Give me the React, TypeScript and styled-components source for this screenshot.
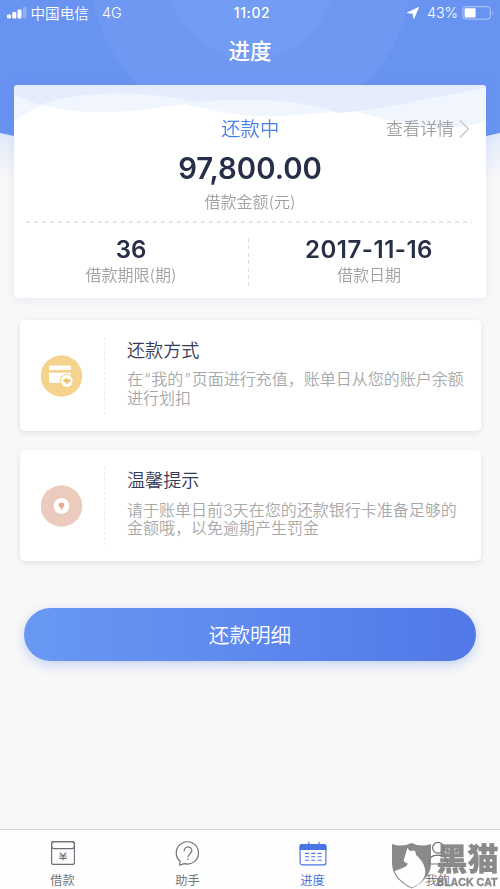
import React from "react";
import styled, { createGlobalStyle } from "styled-components";

const GlobalStyle = createGlobalStyle`
  * { box-sizing: border-box; }
  html, body { margin: 0; padding: 0; }
  body {
    width: 500px;
    height: 889px;
    overflow: hidden;
    background: #f8f8f8;
    font-family: Inter, "Noto Sans CJK SC", sans-serif;
    -webkit-font-smoothing: antialiased;
  }
`;

const Screen = styled.div`
  position: relative;
  display: flex;
  flex-direction: column;
  width: 500px;
  height: 889px;
  overflow: hidden;
  background: #f8f8f8;
`;

const Backdrop = styled.svg`
  position: absolute;
  top: 0;
  left: 0;
`;

const StatusBar = styled.header`
  position: relative;
  display: grid;
  grid-template-columns: 1fr auto 1fr;
  align-items: center;
  height: 26px;
  padding: 0 6px 0 7px;
  color: #fff;
  font-size: 14px;
  line-height: 20px;
`;

const StatusSide = styled.div<{ $end?: boolean }>`
  display: flex;
  align-items: center;
  justify-content: ${(p) => (p.$end ? "flex-end" : "flex-start")};
`;

const Carrier = styled.span`
  margin: 1px 13px 0 3.5px;
  font-size: 14.6px;
  font-weight: 350;
`;

const Network = styled.span`
  font-size: 14.3px;
  font-weight: 350;
`;

const Clock = styled.span`
  font-size: 14px;
  font-weight: 500;
  letter-spacing: 0.55px;
  padding-left: 3px;
`;

const Percent = styled.span`
  margin: 0 4px 0 8px;
  font-size: 14.3px;
  font-weight: 350;
`;

const PageTitle = styled.h1`
  position: relative;
  margin: 0;
  height: 59px;
  padding-top: 1px;
  color: #fff;
  font-size: 21.5px;
  font-weight: 450;
  line-height: 49px;
  text-align: center;
`;

const LoanCard = styled.section`
  position: relative;
  flex: none;
  display: flex;
  flex-direction: column;
  height: 213px;
  margin: 0 14px;
  overflow: hidden;
  border-radius: 4px;
  background: #fff;
`;

const CardShadow = styled.div`
  position: relative;
  margin-top: 0.4px;
  border-radius: 4px;
  filter: drop-shadow(0 1px 5px rgba(90, 110, 220, 0.13));
`;

const Waves = styled.svg`
  position: absolute;
  top: 0;
  left: 0;
`;

const CardTop = styled.div`
  position: relative;
  display: grid;
  grid-template-columns: 1fr auto 1fr;
  align-items: center;
  height: 28px;
  margin-top: 29px;
  padding-right: 16.5px;
`;

const Status = styled.span`
  grid-column: 2;
  padding: 1px 0 0 17px;
  color: #4a7ff0;
  font-size: 19.3px;
  font-weight: 350;
  line-height: 28px;
`;

const DetailLink = styled.a`
  display: flex;
  align-items: center;
  justify-content: flex-end;
  gap: 4.5px;
  color: #a0a0a0;
  font-size: 17px;
  font-weight: 350;
  line-height: 24px;
  svg { margin-top: 1px; }
`;

const Amount = styled.div`
  height: 44px;
  margin-top: 5px;
  color: #262f47;
  font-size: 29.3px;
  font-weight: 600;
  line-height: 44px;
  text-align: center;
`;

const Label = styled.div`
  color: #a0a0a0;
  font-size: 16px;
  font-weight: 350;
  line-height: 22px;
  text-align: center;
`;

const Divider = styled.div`
  flex: none;
  height: 1.5px;
  margin: 8px 14px 0 12px;
  background: repeating-linear-gradient(90deg, #e6e6e8 0 4px, transparent 4px 7.95px);
`;

const Facts = styled.div`
  display: grid;
  grid-template-columns: 234px 2px 236px;
  margin-top: 13px;
`;

const Fact = styled.div<{ $shift: number }>`
  display: flex;
  flex-direction: column;
  align-items: center;
  padding-left: ${(p) => p.$shift}px;
`;

const FactValue = styled.div<{ $tracking?: number }>`
  color: #262f47;
  font-size: 24px;
  font-weight: 600;
  line-height: 28px;
  letter-spacing: ${(p) => p.$tracking ?? 0}px;
`;

const FactRule = styled.div`
  width: 1px;
  height: 48px;
  margin-top: 2px;
  background: repeating-linear-gradient(180deg, #dedee2 0 4px, transparent 4px 7.4px);
`;

const InfoList = styled.div`
  display: flex;
  flex-direction: column;
  gap: 19.5px;
  margin: 21.5px 19.5px 0;
`;

const InfoCard = styled.section`
  display: grid;
  grid-template-columns: 84px 1px 1fr;
  height: 111px;
  border-radius: 5px;
  background: #fff;
  box-shadow: 0 2px 6px rgba(0, 0, 0, 0.09);
`;

const InfoIcon = styled.div`
  display: flex;
  align-items: center;
  justify-content: center;
  padding-top: 1px;
`;

const InfoRule = styled.div`
  height: 78px;
  margin-top: 17px;
  background: repeating-linear-gradient(180deg, #eeeeee 0 3px, transparent 3px 5px);
`;

const InfoBody = styled.div`
  padding: 17px 0 0 22.5px;
`;

const InfoTitle = styled.h2`
  margin: 0;
  color: #343b59;
  font-size: 18.1px;
  font-weight: 350;
  line-height: 26px;
`;

const InfoText = styled.p`
  margin: 7.5px 0 0;
  color: #a8a8a8;
  font-size: 16px;
  font-weight: 350;
  line-height: 18.5px;
  white-space: nowrap;
`;

const Quote = styled.span`
  padding: 0 0.9px;
`;

const DetailButton = styled.button`
  flex: none;
  height: 53px;
  margin: 46.2px 24px 0;
  padding: 0;
  border: 0;
  border-radius: 27px;
  background: linear-gradient(90deg, #6998f4, #5f8aef 45%, #5178e7);
  box-shadow: 0 4px 12px rgba(86, 126, 235, 0.3);
  color: #fff;
  font-family: inherit;
  font-size: 20.6px;
  font-weight: 350;
`;

const TabBar = styled.nav`
  display: grid;
  grid-template-columns: repeat(4, 125px);
  height: 60px;
  margin-top: auto;
  border-top: 1px solid #d3d3d5;
  background: #fefefe;
`;

const Tab = styled.a<{ $active?: boolean }>`
  display: flex;
  flex-direction: column;
  align-items: center;
  padding-top: 10px;
  color: ${(p) => (p.$active ? "#4a73e5" : "#74777c")};
  font-size: 12.2px;
  line-height: 18px;
  svg { display: block; margin-bottom: 4px; }
`;

const Watermark = styled.div`
  position: absolute;
  right: 0;
  bottom: 0;
  display: flex;
  width: 109px;
  height: 47px;
  color: #828282;
  opacity: 0.93;
`;

const Brand = styled.div`
  display: flex;
  flex-direction: column;
  margin-left: -0.5px;
  white-space: nowrap;
`;

const BrandName = styled.span`
  height: 34px;
  font-size: 31px;
  font-weight: 900;
  line-height: 34px;
  -webkit-text-stroke: 0.4px #828282;
`;

const BrandLatin = styled.span`
  font-family: "Liberation Sans", sans-serif;
  font-size: 10.6px;
  font-weight: 700;
  line-height: 12px;
  -webkit-text-stroke: 0.4px #828282;
`;

const BackdropArt = () => (
  <Backdrop width="500" height="190" viewBox="0 0 500 190">
    <defs>
      <linearGradient id="fade" x1="0" y1="0" x2="0" y2="1">
        <stop offset="0" stopColor="#dbe6fa" />
        <stop offset="0.5" stopColor="#e9effa" />
        <stop offset="1" stopColor="#f8f8f8" />
      </linearGradient>
      <clipPath id="header">
        <path d="M0 0H500V133Q250 191 0 133Z" />
      </clipPath>
    </defs>
    <rect y="120" width="500" height="60" fill="url(#fade)" />
    <g clipPath="url(#header)">
      <rect width="500" height="190" fill="#6893f1" />
      <circle cx="251" cy="-29" r="160.6" fill="#6f98f3" />
      <circle cx="251" cy="-24" r="83" fill="#739cf4" />
    </g>
  </Backdrop>
);

const SignalIcon = () => (
  <svg width="20" height="12" viewBox="0 0 20 12" fill="#fff">
    <rect y="7.5" width="4" height="4" rx="1" />
    <rect x="5.3" y="5" width="4" height="6.5" rx="1" />
    <rect x="10.5" y="2.5" width="4" height="9" rx="1" />
    <rect x="15.7" y="0" width="4" height="11.5" rx="1" opacity=".25" />
  </svg>
);

const LocationIcon = () => (
  <svg width="12" height="12" viewBox="0 0 12 12">
    <path d="M12 0L6.8 12L5.8 6.6L0 5.8Z" fill="#fff" stroke="#fff" strokeWidth=".5" />
  </svg>
);

const BatteryIcon = () => (
  <svg width="32" height="14" viewBox="0 0 32 14">
    <rect x=".9" y=".7" width="27.4" height="12.4" rx="3" fill="none" stroke="#fff" strokeOpacity=".5" />
    <rect x="2.6" y="2.3" width="11" height="9.2" rx="1" fill="#fff" />
    <path d="M30 4.7Q31.7 7 30 9.3Z" fill="#fff" opacity=".5" />
  </svg>
);

const PayCardIcon = () => (
  <svg width="42" height="42" viewBox="0 0 42 42">
    <circle cx="20.5" cy="21" r="20.7" fill="#f5d38c" />
    <path d="M8 12.5Q8 10.5 10 10.5H28Q30 10.5 30 12.5V15H8Z" fill="#fff" />
    <path d="M8 17.8H30V28H10Q8 28 8 26Z" fill="#fff" />
    <circle cx="25.8" cy="26" r="7" fill="#f5d38c" />
    <circle cx="25.8" cy="26" r="5.9" fill="#fff" />
    <path d="M25.8 22.2V24.2H29.2V27.6H27V29.4L21.8 25.8Z" fill="#f0c26b" />
  </svg>
);

const TipIcon = () => (
  <svg width="42" height="42" viewBox="0 0 42 42">
    <circle cx="20.5" cy="21" r="20.7" fill="#ebcbbd" />
    <circle cx="20.5" cy="21" r="9" fill="#e7c3b7" />
    <circle cx="20.5" cy="21" r="8" fill="#fff" />
    <path d="M17.6 20.5A2.9 2.9 0 1 1 23.4 20.5Q23 22.2 21.4 22.8V24.7H19.8V22.8Q18 22.2 17.6 20.5Z" fill="#eaa88f" />
  </svg>
);

const LoanIcon = () => (
  <svg width="26" height="28" viewBox="0 0 26 28" fill="none" stroke="#6d7077" strokeWidth="1.15">
    <rect x="1.6" y="1.6" width="22.8" height="22.8" rx="2" />
    <rect x="1.6" y="1.6" width="22.8" height="7" rx="2.6" />
    <path d="M9.8 12.6L13 16L16.2 12.6M9.3 16H16.7M9.3 18.3H16.7M13 16V20.5" />
  </svg>
);

const HelpIcon = () => (
  <svg width="26" height="28" viewBox="0 0 26 28" fill="none" stroke="#6d7077" strokeWidth="1.15">
    <path d="M5.1 21.3A11.1 11.1 0 1 1 9.4 23.6L4.5 25.2Z" strokeLinejoin="round" />
    <path d="M9.2 11.4C8.6 5.5 17 5.7 16.9 10.6C16.8 13.8 13 13.8 13 17.2" />
    <path d="M13 18.6V20.1" />
  </svg>
);

const CalendarIcon = () => (
  <svg width="28" height="28" viewBox="0 0 28 28" fill="none" stroke="#4a73e5" strokeWidth="1.15">
    <rect x="1.1" y="4.5" width="25.8" height="20.3" rx="2" />
    <path d="M1.1 9.5V6.5Q1.1 4.5 3.1 4.5H24.9Q26.9 4.5 26.9 6.5V9.5Z" fill="#4a73e5" />
    <path d="M9.8 1.8V6M20 1.8V6" />
    <path d="M6 13.3H10M12.3 13.3H16.3M18.6 13.3H22.6M6 16.7H10M12.3 16.7H16.3M18.6 16.7H22.6M6 20.2H10M12.3 20.2H16.3M18.6 20.2H22.6" />
  </svg>
);

const UserIcon = () => (
  <svg width="26" height="28" viewBox="0 0 26 28" fill="none" stroke="#6d7077" strokeWidth="1.2">
    <circle cx="13" cy="7.8" r="5.4" />
    <path d="M3.5 24Q3.5 15.2 13 15.2Q22.5 15.2 22.5 24Z" />
  </svg>
);

const ShieldCat = () => (
  <svg width="46" height="47" viewBox="0 0 46 47">
    <path d="M1 2Q11 5.5 20.5 1Q30 5.5 40 2V21Q40 37 20.5 46.5Q1 37 1 21Z" fill="#828282" />
    <path d="M16.4 5.7L19 9.2Q22 8 24.3 9.3L25 13C28.8 16.5 33.4 20.8 34.3 29C34.7 34.5 31.3 39.1 27.1 42.3Q24 44.2 20.5 45.5Q8 39.3 3.5 29.2C9.2 26.4 15.7 25.7 16.8 21.4C13.4 20.2 11.6 19.2 13.5 15.8Z" fill="#fff" />
  </svg>
);

export default function App() {
  return (
    <>
      <GlobalStyle />
      <Screen>
        <BackdropArt />
        <StatusBar>
          <StatusSide>
            <SignalIcon />
            <Carrier>中国电信</Carrier>
            <Network>4G</Network>
          </StatusSide>
          <Clock>11:02</Clock>
          <StatusSide $end>
            <LocationIcon />
            <Percent>43%</Percent>
            <BatteryIcon />
          </StatusSide>
        </StatusBar>
        <PageTitle>进度</PageTitle>
        <CardShadow>
          <LoanCard>
            <Waves width="472" height="50" viewBox="0 0 472 50">
              <path d="M0 0H472V36C400 58 350 20 270 11C210 5 160 28 80 27C45 26 25 20 0 9Z" fill="#f1f5fe" />
              <path d="M0 36C30 16 55 8 94 8C145 8 200 31 250 31C320 31 400 14 472 3V0H0Z" fill="#f1f5fe" />
              <path d="M0 0H472V3C410 14 370 24 325 28C280 13 240 13 178 17C140 7 75 3 26 20Q10 15 0 9Z" fill="#e5edfc" />
            </Waves>
            <CardTop>
              <Status>还款中</Status>
              <DetailLink>
                查看详情
                <svg width="11" height="20" viewBox="0 0 11 20" fill="none" stroke="#c3c5ca" strokeWidth="1.3">
                  <path d="M1 1.5L9.5 10L1 18.5" />
                </svg>
              </DetailLink>
            </CardTop>
            <Amount>97,800.00</Amount>
            <Label>借款金额(元)</Label>
            <Divider />
            <Facts>
              <Fact $shift={-1}>
                <FactValue>36</FactValue>
                <Label>借款期限(期)</Label>
              </Fact>
              <FactRule />
              <Fact $shift={2}>
                <FactValue $tracking={0.5}>2017-11-16</FactValue>
                <Label>借款日期</Label>
              </Fact>
            </Facts>
          </LoanCard>
        </CardShadow>
        <InfoList>
          <InfoCard>
            <InfoIcon><PayCardIcon /></InfoIcon>
            <InfoRule />
            <InfoBody>
              <InfoTitle>还款方式</InfoTitle>
              <InfoText>在<Quote>“</Quote>我的<Quote>”</Quote>页面进行充值，账单日从您的账户余额<br />进行划扣</InfoText>
            </InfoBody>
          </InfoCard>
          <InfoCard>
            <InfoIcon><TipIcon /></InfoIcon>
            <InfoRule />
            <InfoBody>
              <InfoTitle>温馨提示</InfoTitle>
              <InfoText>请于账单日前3天在您的还款银行卡准备足够的<br />金额哦，以免逾期产生罚金</InfoText>
            </InfoBody>
          </InfoCard>
        </InfoList>
        <DetailButton>还款明细</DetailButton>
        <TabBar>
          <Tab><LoanIcon />借款</Tab>
          <Tab><HelpIcon />助手</Tab>
          <Tab $active><CalendarIcon />进度</Tab>
          <Tab><UserIcon />我的</Tab>
        </TabBar>
        <Watermark>
          <ShieldCat />
          <Brand>
            <BrandName>黑猫</BrandName>
            <BrandLatin>BLACK CAT</BrandLatin>
          </Brand>
        </Watermark>
      </Screen>
    </>
  );
}
